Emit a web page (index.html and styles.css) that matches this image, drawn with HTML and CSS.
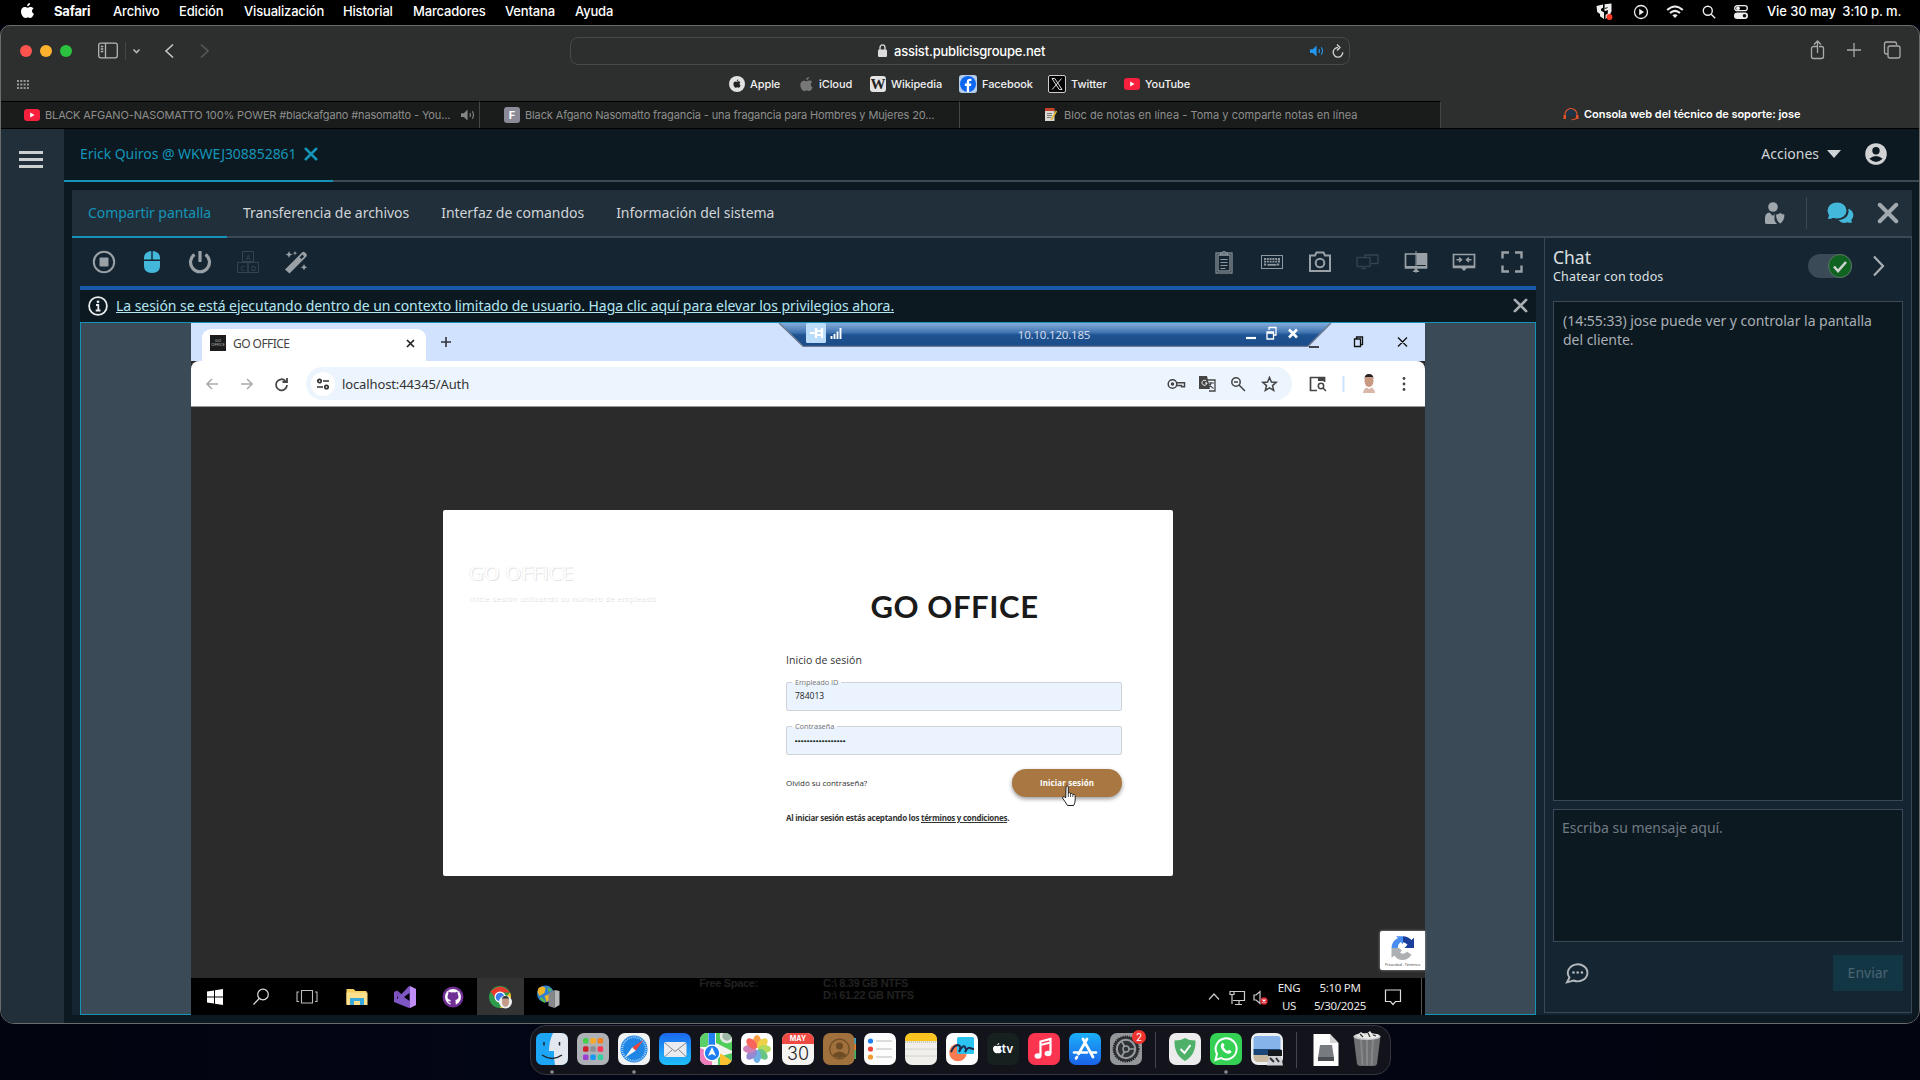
FILE: index.html
```html
<!DOCTYPE html>
<html lang="es">
<head>
<meta charset="utf-8">
<title>Consola web del técnico de soporte: jose</title>
<link rel="stylesheet" href="styles.css">
</head>
<body>
<svg width="0" height="0" class="defs">
  <symbol id="apple" viewBox="0 0 14 17"><path d="M9.8 0c.1 1.8-1.500 3.600-3.200 3.500C6.400 1.800 8 .2 9.800 0zM13.500 5.700c-1 .6-1.600 1.500-1.600 2.800 0 1.500.8 2.500 2 3-.6 1.900-2 4.500-3.700 4.500-1 0-1.500-.6-2.700-.6s-1.800.6-2.700.6C2.600 16 0 12.500 0 9c0-3 1.900-4.800 4-4.800 1.200 0 2.100.7 3 .7.900 0 2-.8 3.400-.8 1.200 0 2.400.6 3.100 1.600z"/></symbol>
  <symbol id="yt" viewBox="0 0 16 12"><rect width="16" height="12" rx="3.200" fill="#f8203c"/><path d="M6.200 3.500v5L10.600 6z" fill="#fff"/></symbol>
  <symbol id="speaker" viewBox="0 0 16 12"><path d="M0 4h3l4-3.800v11.600L3 8H0z" fill="currentColor"/><path d="M9.500 3.800q1.200 2.200 0 4.400M12 2q2.600 4 0 8" fill="none" stroke="currentColor" stroke-width="1.200"/></symbol>
  <symbol id="cross" viewBox="0 0 20 20"><path d="M2.500 2.500l15 15M17.500 2.500l-15 15" stroke="currentColor" stroke-width="3.600" stroke-linecap="round"/></symbol>
</svg>

<header class="menubar">
  <nav class="menus">
    <svg class="logo" width="13" height="16"><use href="#apple" fill="#fff"/></svg>
    <b>Safari</b><span>Archivo</span><span>Edición</span><span>Visualización</span><span>Historial</span><span>Marcadores</span><span>Ventana</span><span>Ayuda</span>
  </nav>
  <div class="status">
    <svg width="18" height="18" viewBox="0 0 18 18"><path d="M.5 3L7 1.500v3.300L5 6v1.500l3 1.800V16L4 13.300V11L1.200 9zM8.500 1.200L15.500.5v8L13 13l-3.500 3v-4l2.300-1.500V7L8.500 8.300z" fill="#eee"/><path d="M7.800 1v4L5.500 6.200v1l3 1.600V16M8.600 5.600l3-1" stroke="#000" fill="none" stroke-width=".9"/><circle cx="13.500" cy="14" r="2.900" fill="#ff3b24"/></svg>
    <svg width="16" height="16" viewBox="0 0 16 16"><circle cx="8" cy="8" r="6.500" fill="none" stroke="#eee" stroke-width="1.300"/><path d="M6.200 4.800v6.400L11 8z" fill="#eee"/></svg>
    <svg width="18" height="14" viewBox="0 0 18 14"><g fill="none" stroke="#eee" stroke-width="2.100"><path d="M1.200 5q7.800-7 15.600 0M4 8q5-4.400 10 0"/></g><path d="M6.400 10.200q2.600-2 5.200 0L9 13z" fill="#eee"/></svg>
    <svg width="14" height="14" viewBox="0 0 14 14"><g fill="none" stroke="#eee" stroke-width="1.400"><circle cx="5.800" cy="5.800" r="4.500"/><path d="M9.200 9.200l4 4"/></g></svg>
    <svg width="14" height="14" viewBox="0 0 14 14"><rect x=".7" y=".7" width="12.600" height="5" rx="2.500" fill="none" stroke="#eee" stroke-width="1.300"/><circle cx="4" cy="3.200" r="1.900" fill="#eee"/><rect y="7.500" width="14" height="6.500" rx="3.200" fill="#eee"/><circle cx="10.500" cy="10.700" r="1.800" fill="#111"/></svg>
    <time>Vie 30 may&ensp;3:10 p. m.</time>
  </div>
</header>

<div class="window">
  <div class="toolbar">
    <div class="lights"><i></i><i></i><i></i></div>
    <svg class="side-ic" width="40" height="22" viewBox="0 0 40 22"><g fill="none" stroke="#b5b6b5" stroke-width="1.300"><rect x=".7" y="3.200" width="18.600" height="14.600" rx="2"/><path d="M7.500 3v15M2.800 6.500h2.500M2.800 9h2.500M2.800 11.500h2.500"/><path d="M27.500 2v18" stroke="#454746" stroke-width="1"/><path d="M35.500 9.500l3 3 3-3" stroke-width="1.600"/></g></svg>
    <svg class="nav-ic" width="60" height="20" viewBox="0 0 60 20"><path d="M12 3.500L5 10l7 6.500" fill="none" stroke="#c5c6c5" stroke-width="1.600"/><path d="M40 3.500l7 6.500-7 6.500" fill="none" stroke="#575958" stroke-width="1.600"/></svg>
    <div class="urlbar">
      <svg width="9" height="14" viewBox="0 0 9 14"><rect y="5.500" width="9" height="7.500" rx="1.300" fill="#dcdcdc"/><path d="M2 6V3.500a2.500 2.700 0 0 1 5 0V6" fill="none" stroke="#dcdcdc" stroke-width="1.300"/></svg>
      <span>assist.publicisgroupe.net</span>
      <div class="url-right">
        <svg width="15" height="12" color="#2196f3"><use href="#speaker"/></svg>
        <svg width="12" height="15" viewBox="0 0 12 15"><path d="M6 3.500a4.800 4.800 0 1 0 4.800 4.800M5 .5l3 3-3 3" fill="none" stroke="#d5d5d5" stroke-width="1.300"/></svg>
      </div>
    </div>
    <svg class="right-ic" width="95" height="24" viewBox="0 0 95 24"><g fill="none" stroke="#a9aaa9" stroke-width="1.300"><path d="M8 8.500H4.500a2 2 0 0 0-2 2v8a2 2 0 0 0 2 2h8a2 2 0 0 0 2-2v-8a2 2 0 0 0-2-2H10M8.500 15V3.500M5 6.500l3.500-3.500L12 6.500M38 12h14M45 5v14"/><path d="M79 16h-1.500a2 2 0 0 1-2-2V6a2 2 0 0 1 2-2h8a2 2 0 0 1 2 2v1"/><rect x="79" y="8" width="12" height="12" rx="2"/></g></svg>
  </div>
  <div class="bookmarks">
    <svg class="grid-ic" width="12" height="9" viewBox="0 0 12 9"><g fill="#999"><path d="M0 0h2v2H0zM3.300 0h2v2h-2zM6.600 0h2v2h-2zM9.900 0h2v2h-2zM0 3.500h2v2H0zM3.300 3.500h2v2h-2zM6.600 3.500h2v2h-2zM9.900 3.500h2v2h-2zM0 7h2v2H0zM3.300 7h2v2h-2zM6.600 7h2v2h-2zM9.900 7h2v2h-2z"/></g></svg>
    <a class="bm-apple"><svg width="16" height="16" viewBox="0 0 16 16"><circle cx="8" cy="8" r="8" fill="#e2e2e2"/><svg x="4.200" y="3.200" width="7.600" height="9"><use href="#apple" fill="#222"/></svg></svg>Apple</a>
    <a class="bm-icloud"><svg width="13" height="15"><use href="#apple" fill="#777"/></svg>iCloud</a>
    <a class="bm-wiki"><i class="wik">W</i>Wikipedia</a>
    <a class="bm-fb"><svg width="18" height="18" viewBox="0 0 18 18"><rect width="18" height="18" rx="3" fill="#b8cdea"/><circle cx="9" cy="9" r="8" fill="#0a66f0"/><path d="M7.800 17V11H5.800V8.500h2V7c0-2.200 1.200-3.300 3.100-3.300l1.500.1V6h-1.100c-1 0-1.200.5-1.200 1.200v1.300h2.200L12 11h-1.900v6z" fill="#fff"/></svg>Facebook</a>
    <a class="bm-x"><svg width="18" height="18" viewBox="0 0 18 18"><rect x=".5" y=".5" width="17" height="17" rx="1.500" fill="#050505" stroke="#ccc"/><path d="M4 3.500h2.800l7.200 11h-2.800zM13.500 3.500L4.200 14.500" fill="none" stroke="#ddd"/></svg>Twitter</a>
    <a class="bm-yt"><svg width="16" height="12"><use href="#yt"/></svg>YouTube</a>
  </div>
  <div class="tabs">
    <div class="tab t1"><svg width="16" height="12"><use href="#yt"/></svg><span>BLACK AFGANO-NASOMATTO 100% POWER #blackafgano #nasomatto - You...</span><svg class="snd" width="15" height="12" color="#858685"><use href="#speaker"/></svg></div>
    <div class="tab t2"><i class="fav-f">F</i><span>Black Afgano Nasomatto fragancia - una fragancia para Hombres y Mujeres 20...</span></div>
    <div class="tab t3"><svg width="13" height="13" viewBox="0 0 13 13"><rect x="1" y="2" width="9.500" height="11" fill="#d8d8d0"/><path d="M1 0h9.500v3H1z" fill="#c5432b"/><path d="M3 5.500h5M3 7.500h5M3 9.500h4" stroke="#777"/><path d="M12.500 3L8 10.500l-.5 1.500" stroke="#e3b62d" stroke-width="1.500"/></svg><span>Bloc de notas en línea - Toma y comparte notas en línea</span></div>
    <div class="tab t4"><svg width="16" height="13" viewBox="0 0 16 13"><path d="M3 8a5.300 6 0 1 1 10 0z" fill="#1f3447"/><path d="M2 9V6.500a6 6 0 0 1 12 0V9M13.500 9q0 2.700-5 2.800" fill="none" stroke="#e2502a" stroke-width="1.100"/><path d="M.5 7H3v4H.5zM13 7h2.500v4H13z" fill="#e2502a"/></svg><span>Consola web del técnico de soporte: jose</span></div>
  </div>

  <div class="console">
    <aside class="rail"><i></i><i></i><i></i></aside>
    <main class="main">
      <div class="session-bar">
        <div class="session"><span>Erick Quiros @ WKWEJ308852861</span><svg width="14" height="14" color="#1495b8"><use href="#cross"/></svg></div>
        <div class="actions"><span>Acciones</span><i class="caret"></i>
          <svg width="22" height="22" viewBox="0 0 22 22"><circle cx="11" cy="11" r="10.800" fill="#d0d2d4"/><circle cx="11" cy="7.800" r="3.700" fill="#0c1921"/><path d="M4.300 15.800q6.700-5.500 13.400 0Q11 22 4.300 15.800z" fill="#0c1921"/></svg></div>
      </div>
      <div class="panel">
        <div class="panel-tabs">
          <span class="on">Compartir pantalla</span><span>Transferencia de archivos</span><span>Interfaz de comandos</span><span>Información del sistema</span>
          <div class="panel-ic">
            <svg width="22" height="24" viewBox="0 0 22 24"><g fill="#9fa6ac"><circle cx="9" cy="6" r="4.800"/><path d="M1 22v-5q0-5 4.500-5.500L9 15l1.500-2.500V19q.5 2 2.500 4H3q-2 0-2-1z"/><path d="M11.500 13.200q2.800-.2 4.700-1.700 2 1.500 4.800 1.700 0 7-4.800 9.800-4.700-2.800-4.700-9.800z" stroke="#212f3b"/></g></svg>
            <i class="vline"></i>
            <svg width="27" height="24" viewBox="0 0 27 24"><path d="M25 21.500l-.7-2.500c3.500-3.500 2.500-9.500-3-11.200 1.500 6.500-3 11-9.800 11.200 2.500 3.200 6 3.700 9 2.300 1.500.7 3 .7 4.500.2z" fill="#43b8da"/><ellipse cx="10" cy="9.500" rx="9.500" ry="8" fill="#43b8da"/><path d="M2.500 12l-1.500 6q3.500 0 5.500-1.500z" fill="#43b8da"/></svg>
            <svg width="22" height="22" color="#a2a9ae"><use href="#cross"/></svg>
          </div>
        </div>
        <div class="work">
          <section class="share">
            <div class="tools">
              <svg viewBox="0 0 24 24"><circle cx="12" cy="12" r="10.200" fill="none" stroke="#99a1a7" stroke-width="2"/><rect x="7.500" y="7.500" width="9" height="9" rx="1" fill="#99a1a7"/></svg>
              <svg viewBox="0 0 24 24"><path d="M11.300 1v8.500H4V8q0-6 7.300-7zM12.700 1v8.500H20V8q0-6-7.300-7zM4 11h16v5q0 7-8 7t-8-7z" fill="#43b8da"/></svg>
              <svg viewBox="0 0 24 24"><path d="M6.500 4.500a9.500 9.500 0 1 0 11 0M12 1v11" fill="none" stroke="#99a1a7" stroke-width="3.200"/></svg>
              <svg viewBox="0 0 24 24"><g fill="none" stroke="#33434f"><path d="M6.500 1.500h11v10h-11zM1.500 12.500h10.500v10H1.500zM12 12.500h10.500v10H12z"/></g><g class="blk"><text x="10" y="9.500">A</text><text x="4.500" y="20.500">C</text><text x="15" y="20.500">D</text></g></svg>
              <svg viewBox="0 0 24 24"><g fill="#99a1a7"><path d="M1 19.500L18 2.500q1.500-1.500 3 0l1.200 1.200q1.300 1.500 0 3L5.500 23.500z"/><path d="M5 1l1 2.500L8.500 4.500 6 5.500 5 8 4 5.500 1.500 4.500 4 3.500zM11 1l.6 1.600 1.600.6-1.600.6L11 5.400l-.6-1.600-1.600-.6 1.600-.6zM20 14l1 2.300 2.300 1-2.300 1L20 20.500l-1-2.200-2.300-1 2.300-1z"/></g><path d="M15.500 7.500l3-3 1.500 2-2.500 2.500z" fill="#152531"/></svg>
              <i class="grow"></i>
              <svg viewBox="0 0 24 24"><g fill="none" stroke="#8f989f" stroke-width="1.200"><rect x="4" y="3" width="16" height="20"/><rect x="6" y="5" width="12" height="16"/><path d="M8.500 5V3h2a1.500 1.500 0 0 1 3 0h2v2zM8.500 9.500h7M8.500 12.500h7M8.500 15.500h7M8.500 18.500h5"/></g></svg>
              <svg viewBox="0 0 24 24"><rect x="1.500" y="5.500" width="21" height="13" fill="none" stroke="#8f989f"/><path d="M4 9h16M4 11.700h16M4 14.500h3M17 14.500h3M19 8.500v4" stroke="#8f989f" stroke-width="1.800" stroke-dasharray="2 .8"/><path d="M7.500 14.800h9" stroke="#8f989f" stroke-width="1.800"/></svg>
              <svg viewBox="0 0 24 24"><g fill="none" stroke="#99a1a7" stroke-width="2"><path d="M2 5.500h5l1.500-3h7l1.500 3h5v15.500H2z"/><circle cx="12" cy="13" r="4.300"/></g></svg>
              <svg viewBox="0 0 24 24"><g fill="none" stroke="#35454f" stroke-width="1.300"><rect x="1" y="7.500" width="13" height="9"/><path d="M14 5h8v8.500h-7M5 18.500h5M9 7V5h5"/></g></svg>
              <svg viewBox="0 0 24 24"><path d="M1.500 4h21v14h-21z" fill="none" stroke="#99a1a7" stroke-width="1.700"/><path d="M12.500 3H23v12H12.500zM1 16h22v2H1zM12 18l3.500 4h-7z" fill="#99a1a7"/><path d="M12 1v22" stroke="#99a1a7"/></svg>
              <svg viewBox="0 0 24 24"><path d="M1.500 4.500h21v13h-21z" fill="none" stroke="#99a1a7" stroke-width="1.700"/><path d="M1 15.500h22v2.500H1zM9 18h6l-3 3z" fill="#99a1a7"/><path d="M4.500 9.800h4.500M7 7.500l2.500 2.300L7 12M19.500 9.800H15M17 7.500l-2.500 2.300L17 12" fill="none" stroke="#99a1a7" stroke-width="1.500"/></svg>
              <svg viewBox="0 0 24 24"><path d="M2.500 8.500V2.500H9M15 2.500h6.500v6M21.500 15.500v6H15M9 21.500H2.500v-6" fill="none" stroke="#99a1a7" stroke-width="2.400"/></svg>
            </div>
            <div class="notice">
              <svg width="20" height="20" viewBox="0 0 20 20"><circle cx="10" cy="10" r="8.900" fill="none" stroke="#e8eaeb" stroke-width="1.800"/><circle cx="10" cy="5.800" r="1.400" fill="#e8eaeb"/><path d="M8 9h2.300v5.500M7.700 14.500h4.800" fill="none" stroke="#e8eaeb" stroke-width="1.800"/></svg>
              <a>La sesión se está ejecutando dentro de un contexto limitado de usuario. Haga clic aquí para elevar los privilegios ahora.</a>
              <svg class="x" width="15" height="15" color="#a9afb3"><use href="#cross"/></svg>
            </div>
            <div class="stage">
              <div class="remote">
                <div class="ch-tabs">
                  <div class="ch-tab"><i class="gofav">GO<br>OFFICE</i><span>GO OFFICE</span><svg width="9" height="9" viewBox="0 0 9 9"><path d="M1 1l7 7M8 1L1 8" stroke="#222" stroke-width="1.700"/></svg></div>
                  <svg class="plus" width="12" height="12" viewBox="0 0 12 12"><path d="M6 1v10M1 6h10" stroke="#333" stroke-width="1.600"/></svg>
                  <svg class="wbtn" width="98" height="12" viewBox="0 0 98 12"><g fill="none" stroke="#111" stroke-width="1.300"><path d="M4 11.500h10M49.500 3.500h6v7.500h-6zM51.500 3.500V1.500h6V9h-2M93 2l9 9M102 2l-9 9" transform="translate(-5 -.5)"/></g></svg>
                </div>
                <div class="rdp">
                  <svg class="rdp-bg" width="552" height="24" viewBox="0 0 552 24"><defs><linearGradient id="rg" x2="0" y2="1"><stop stop-color="#85acdb"/><stop offset=".42" stop-color="#3f73b0"/><stop offset=".52" stop-color="#1e5290"/><stop offset="1" stop-color="#1c4c8a"/></linearGradient></defs><path d="M0 0h552l-23 23H24z" fill="url(#rg)"/><path d="M0 0l24 23.300h505L552 0" fill="none" stroke="#6e7a8d" stroke-width="1.300"/><rect x="27" y="0" width="20" height="20" rx="1.500" fill="#bcdcfc"/><path d="M31 10h6M37 5v10M37 8h6v4h-6M43 5v10" stroke="#fff" stroke-width="2.200" fill="none"/><path d="M52.500 13v3M55.500 11v5M58.500 8.500v7.500M61.500 5v11" stroke="#fff" stroke-width="1.900"/><path d="M467 15h10" stroke="#fff" stroke-width="2.200"/><path d="M488 9h6.500v7H488zM490 7V4.500h7V12h-2M488 10h6.500" fill="none" stroke="#fff" stroke-width="1.300"/><path d="M510 6.500l8 8M518 6.500l-8 8" stroke="#fff" stroke-width="2.600"/></svg>
                  <span>10.10.120.185</span>
                </div>
                <div class="ch-bar">
                  <svg class="cb-nav" width="90" height="18" viewBox="0 0 90 18"><g fill="none" stroke="#aaa" stroke-width="1.500"><path d="M17 9H6M11 4L6 9l5 5M40 9h11M46 4l5 5-5 5"/></g><path d="M89.500 6A5.500 5.500 0 1 0 91 10M91 3v4h-4.500" fill="none" stroke="#444" stroke-width="1.800" transform="translate(-5 0)"/></svg>
                  <div class="omni">
                    <i class="site"><svg width="14" height="12" viewBox="0 0 14 12"><g fill="none" stroke="#333" stroke-width="1.700"><circle cx="3.500" cy="3" r="1.700"/><path d="M7 3h6M1 9h6"/><circle cx="10.500" cy="9" r="1.700"/></g></svg></i>
                    <span>localhost:44345/Auth</span>
                    <svg class="omni-ic" width="112" height="20" viewBox="0 0 112 20"><g fill="none" stroke="#444" stroke-width="1.500"><g transform="translate(-4 0)"><circle cx="5.500" cy="10" r="4.300"/><circle cx="5.500" cy="10" r="1" fill="#444"/><path d="M9.500 8.800h8v4h-3v-1.300H9.500"/></g><g transform="translate(-2 0)"><path d="M37 6h9v11h-6" stroke-width="1.300"/><path d="M39 9h6M42 8v1.500q-1 3-3 4M40 10q2 3 4.500 4.500" stroke-width="1.100"/></g><g transform="translate(-2 0)"><circle cx="67" cy="8" r="4.200"/><path d="M65 8h4M70 11l6 6"/></g><path d="M98.500 3.500l1.900 4.500 4.800.4-3.700 3.200 1.200 4.800-4.200-2.600-4.200 2.600 1.200-4.800-3.700-3.200 4.800-.4z"/></g><g transform="translate(-2 0)"><path d="M30 2h8l3 13H30z" fill="#444"/><path d="M37.300 7A2.500 2.500 0 1 0 38 9h-2" fill="none" stroke="#fff"/></g></svg>
                  </div>
                  <svg class="cb-right" width="104" height="24" viewBox="0 0 104 24"><g transform="translate(1 0)"><path d="M9 18.500H2.500V5.500h14V10" fill="none" stroke="#444" stroke-width="1.700"/><path d="M10 5h7v4h-7z" fill="#444"/><circle cx="13" cy="14" r="2.700" fill="none" stroke="#444" stroke-width="1.500"/><path d="M15 16l3 3" stroke="#444" stroke-width="1.500"/><path d="M35.500 4v16" stroke="#cfe2fb" stroke-width="2"/></g><ellipse cx="62" cy="9" rx="4.500" ry="6" fill="#c89880"/><path d="M57.500 7q0-5 4.500-5t4.500 5l-1-2h-7z" fill="#2a2020"/><path d="M56 21q.5-4.500 3.500-5.500l2.500 1.500 2.500-1.500q3 1 3.500 5.500z" fill="#d9b8aa"/><g fill="#444"><circle cx="97" cy="6.500" r="1.400"/><circle cx="97" cy="12" r="1.400"/><circle cx="97" cy="17.500" r="1.400"/></g></svg>
                </div>
                <div class="page">
                  <div class="card">
                    <div class="ghost"><h3>GO OFFICE</h3><p>Inicie sesión utilizando su número de empleado</p></div>
                    <form class="login">
                      <h1>GO OFFICE</h1>
                      <h2>Inicio de sesión</h2>
                      <div class="field"><label>Empleado ID</label>784013</div>
                      <div class="field"><label>Contraseña</label><span class="dots">•••••••••••••••••</span></div>
                      <div class="row"><a>Olvidó su contraseña?</a><div class="btn">Iniciar sesión
                        <svg class="hand" width="16" height="22" viewBox="0 0 16 22"><path d="M5 1.500q1.500-1.200 2.300.3V8q1.700-.8 2.200.5 1.600-.6 2.200.8 2.300-.4 2.500 1.200v4.500q0 2.500-1.500 5.500H6.500Q4 16.500 1.500 13q0-2 2-1.200L4.700 13z" fill="#fff" stroke="#222"/><path d="M7.300 8v4M9.500 8.500V12M11.800 9.500V12" stroke="#222" stroke-width=".8"/></svg></div></div>
                      <p class="terms">Al iniciar sesión estás aceptando los <u>términos y condiciones</u>.</p>
                    </form>
                  </div>
                  <div class="captcha"><svg width="26" height="26" viewBox="0 0 26 26"><path d="M1.500 13A11.500 11.500 0 0 1 8 3L6 1.200h7v8L10.500 7Q8 9 7.800 13z" fill="#4a8df0"/><path d="M13 1.200q5 0 8.500 3.800L24 2.800V13h-9.500l3-3.200Q15.500 7.500 13 7.200z" fill="#1b3e9d"/><path d="M1.500 13h6.300l1 0L12 15.500 10 17.500q3.500 3 7-1l4.500 3.200Q18 25 12.500 25 7.500 25 4.300 20.500L1.500 23z" fill="#adb0b2"/></svg><small>Privacidad - Términos</small></div>
                </div>
                <div class="taskbar">
                  <div class="apps">
                    <svg viewBox="0 0 24 24"><path d="M4 6.500l7-1v6H4zM12 5.300l8-1.300v7.500h-8zM4 12.500h7v6l-7-1zM12 12.500h8V20l-8-1.300z" fill="#fff"/></svg>
                    <svg viewBox="0 0 24 24"><g fill="none" stroke="#ddd" stroke-width="1.200"><circle cx="13" cy="9.500" r="5.300"/><path d="M9.300 13.500L3.500 19.500"/></g></svg>
                    <svg viewBox="0 0 24 24"><path d="M3.500 5.500h11v12.500h-11zM1 7h-2v9.500h2M17 7h2v9.500h-2" fill="none" stroke="#bbb" stroke-width="1.100"/></svg>
                    <svg viewBox="0 0 24 24"><g transform="translate(-1 0)"><path d="M1.500 4h7l2 2h11v13h-20z" fill="#f6cf60"/><path d="M1.500 7.500h21V20h-21z" fill="#fde08b"/><path d="M5 20v-7h14v7h-4v-4H9v4z" fill="#39a8dd"/></g></svg>
                    <svg viewBox="0 0 24 24"><path d="M1 7l3-1.500 14 11V23L1 9z" fill="#7a50b8"/><path d="M1 17V7l3 3v4L16 1l7 3v16l-7 3z" fill="#7f57c4"/><path d="M17 1l6 3v16l-6 3z" fill="#c08cf5"/><path d="M16.500 8v8L11 12z" fill="#000"/></svg>
                    <svg viewBox="0 0 24 24"><circle cx="12" cy="12" r="10.500" fill="#6f2f94"/><circle cx="12" cy="12" r="8" fill="#fff"/><path d="M7.500 6.500l2.500 1q2-.5 4 0l2.500-1 .2 2.500q2.500 5-2.200 6l.3 5.500H9.500V18Q7.500 18 7 16l2.500.7V15Q4.800 14 7.300 9z" fill="#6f2f94"/></svg>
                    <span class="act"><svg viewBox="0 0 24 24"><circle cx="12" cy="12" r="11" fill="#2d9b4b"/><path d="M22 7.500A11 11 0 0 1 12 23l4.500-9z" fill="#fbc116"/><path d="M2.500 6.500L8 14l4-6.500h10q-9-11-19.500-1z" fill="#e8392c"/><circle cx="12" cy="12" r="5.500" fill="#fff"/><circle cx="12" cy="12" r="4.300" fill="#3b7ded"/><circle cx="17.500" cy="17" r="6.500" fill="#eee"/><ellipse cx="17.500" cy="17" rx="3.500" ry="4.800" fill="#c49a86"/><path d="M14 15q0-4 3.500-4t3.500 4l-1-1.500h-5z" fill="#333"/></svg></span>
                    <svg viewBox="0 0 24 24"><g transform="translate(1.500 0)"><circle cx="9" cy="9" r="8.500" fill="#2f7fd0"/><path d="M2 3q4-3 7 0L8 8l-5 3-2-4zM8 11l5-2v6l-3 2z" fill="#f0b428"/><path d="M5 12l4 4-1 2-5-4zM11 2l5 3-4 2z" fill="#59b84b"/><path d="M12 8l6-3v18l-6-2z" fill="#85898b"/><path d="M18 5l5 1v14l-5 3z" fill="#b6b9ba"/></g></svg>
                  </div>
                  <div class="disk"><span>Free Space:</span><span>C:\ 8.39 GB NTFS<br>D:\ 61.22 GB NTFS</span></div>
                  <div class="tray">
                    <svg width="62" height="20" viewBox="0 0 62 20"><g fill="none" stroke="#ccc" stroke-width="1.200"><path d="M4 12.500l5-5.500 5 5.500"/><path d="M29 4.500h10.500v9H28M34 14v3M30 17.500h7M25 4.500h4v3h-4zM27 8v9"/><path d="M49 8v5h2l4 3.500V4.500L51 8z"/></g><circle cx="59" cy="14" r="3.700" fill="#d92a35"/><path d="M57.500 12.500l3 3M60.500 12.500l-3 3" stroke="#fff" stroke-width="1.100"/></svg>
                    <div class="lng">ENG<br>US</div>
                    <div class="clk">5:10 PM<br>5/30/2025</div>
                    <svg class="note" width="18" height="18" viewBox="0 0 18 18"><path d="M1.500 2h15v11.500h-5L9 16.500l-2.500-3h-5z" fill="none" stroke="#ddd" stroke-width="1.200"/></svg>
                  </div>
                </div>
              </div>
            </div>
          </section>
          <aside class="chat">
            <div class="chat-head">
              <div><h4>Chat</h4><p>Chatear con todos</p></div>
              <i class="switch"><svg width="24" height="24" viewBox="0 0 24 24"><circle cx="12" cy="12" r="11.500" fill="#0f621f" stroke="#5b7567"/><path d="M6 12.500l4 4.500 8-9" fill="none" stroke="#cdd3cf" stroke-width="2.600"/></svg></i>
              <svg class="chev" width="14" height="22" viewBox="0 0 14 22"><path d="M2 1.500l9 9.500-9 9.500" fill="none" stroke="#a9b0b5" stroke-width="2.200"/></svg>
            </div>
            <div class="log">(14:55:33) jose puede ver y controlar la pantalla del cliente.</div>
            <div class="msg">Escriba su mensaje aquí.</div>
            <div class="send">
              <svg width="24" height="22" viewBox="0 0 24 22"><path d="M4.500 15.500A9.800 8.500 0 1 1 8.500 18.500L2 20.300z" fill="none" stroke="#b3b9bd" stroke-width="1.900"/><g fill="#b3b9bd"><circle cx="8.500" cy="10.500" r="1.300"/><circle cx="12.700" cy="10.500" r="1.300"/><circle cx="16.900" cy="10.500" r="1.300"/></g></svg>
              <div class="send-btn">Enviar</div>
            </div>
          </aside>
        </div>
      </div>
    </main>
  </div>
</div>

<footer class="dock">
  <svg viewBox="0 0 32 32"><rect width="32" height="32" rx="7" fill="#1d86f2"/><path d="M0 7q0-7 7-7h10q-4 8-4 17h5q0 8 1 15H7q-7 0-7-7z" fill="#1ea6f6"/><path d="M17 0h8q7 0 7 7v18q0 7-7 7h-6q-1.500-7-1-14h-5q0-10 4-18z" fill="#e3e7ee"/><path d="M8 9v3.500M23.500 9v3.500M6 22q10 7 20 0" stroke="#1c2530" stroke-width="1.500" fill="none"/><circle cx="16" cy="39" r="1.800" fill="#8d8f96"/></svg>
  <svg viewBox="0 0 32 32"><rect width="32" height="32" rx="7" fill="#aeb1b6"/><g><rect x="6" y="5" width="5.500" height="5.500" rx="1.500" fill="#43d14a"/><rect x="13.300" y="5" width="5.500" height="5.500" rx="1.500" fill="#f7a928"/><rect x="20.600" y="5" width="5.500" height="5.500" rx="1.500" fill="#f4801f"/><rect x="6" y="13.200" width="5.500" height="5.500" rx="1.500" fill="#d0202c"/><rect x="13.300" y="13.200" width="5.500" height="5.500" rx="1.500" fill="#8c8f94"/><rect x="20.600" y="13.200" width="5.500" height="5.500" rx="1.500" fill="#fb3657"/><rect x="6" y="21.400" width="5.500" height="5.500" rx="1.500" fill="#9a3fd0"/><rect x="13.300" y="21.400" width="5.500" height="5.500" rx="1.500" fill="#1798f5"/><rect x="20.600" y="21.400" width="5.500" height="5.500" rx="1.500" fill="#35cfa0"/></g></svg>
  <svg viewBox="0 0 32 32"><rect width="32" height="32" rx="7" fill="#f2f3f5"/><circle cx="16" cy="16" r="13.500" fill="#1f86e6"/><circle cx="16" cy="16" r="11.800" fill="none" stroke="#d5e9fb" stroke-width="2" stroke-dasharray=".7 1.300"/><path d="M25.500 7L14.300 14.300l3.400 3.400z" fill="#f0453c"/><path d="M6.500 25l7.800-10.700 3.400 3.400z" fill="#f2f2f2"/><circle cx="16" cy="39" r="1.800" fill="#8d8f96"/></svg>
  <svg viewBox="0 0 32 32"><defs><linearGradient id="ml" x2="0" y2="1"><stop stop-color="#1b68ee"/><stop offset="1" stop-color="#1fc0fa"/></linearGradient></defs><rect width="32" height="32" rx="7" fill="url(#ml)"/><rect x="5" y="9" width="22.500" height="15" rx="2" fill="#e9ebee"/><path d="M6 10l10 8.500L27 10M6 23.500l7.500-7M27 23.500l-7.500-7" fill="none" stroke="#85898f"/></svg>
  <svg class="clip" viewBox="0 0 32 32"><rect width="32" height="32" fill="#f3f3f0"/><path d="M0 0h8v14H0z" fill="#5bd06a"/><path d="M16 0h16v18L16 10z" fill="#4fce5c"/><path d="M0 15l12 5v12H0z" fill="#ee7bbb"/><path d="M18 24l14-4v12H18z" fill="#52cc62"/><path d="M20 20l12 8v4H20z" fill="#fbc331"/><path d="M8.500 0H15v14H8.500z" fill="#1f80f3"/><circle cx="27" cy="3" r="6" fill="#9fb5a5" stroke="#e5e9e5" stroke-width="2.500"/><circle cx="12" cy="20" r="7.800" fill="#1f7ff2" stroke="#fff" stroke-width="1.300"/><path d="M12 14l4 9-4-2-4 2z" fill="#fff"/></svg>
  <svg viewBox="0 0 32 32"><rect width="32" height="32" rx="7" fill="#fff"/><g opacity=".82"><ellipse cx="16" cy="8.500" rx="4" ry="6.500" fill="#fb8c1e"/><ellipse cx="16" cy="8.500" rx="4" ry="6.500" fill="#ecc81f" transform="rotate(45 16 16)"/><ellipse cx="16" cy="8.500" rx="4" ry="6.500" fill="#a4d33a" transform="rotate(90 16 16)"/><ellipse cx="16" cy="8.500" rx="4" ry="6.500" fill="#46b96c" transform="rotate(135 16 16)"/><ellipse cx="16" cy="8.500" rx="4" ry="6.500" fill="#4d9de0" transform="rotate(180 16 16)"/><ellipse cx="16" cy="8.500" rx="4" ry="6.500" fill="#7d71c9" transform="rotate(225 16 16)"/><ellipse cx="16" cy="8.500" rx="4" ry="6.500" fill="#c465a8" transform="rotate(270 16 16)"/><ellipse cx="16" cy="8.500" rx="4" ry="6.500" fill="#f6443a" transform="rotate(315 16 16)"/></g></svg>
  <div class="cal"><b>MAY</b><span>30</span></div>
  <svg viewBox="0 0 32 32"><path d="M28 5h5v6h-5z" fill="#3aa5c9"/><path d="M28 11h5v6h-5z" fill="#e3812b"/><path d="M28 17h5v9h-5z" fill="#3cb56a"/><rect width="31.500" height="32" rx="7" fill="#a0713d"/><g fill="none" stroke="#6d4b24" stroke-width="1.200"><circle cx="16.500" cy="16" r="9.800"/></g><circle cx="16.500" cy="13" r="3.500" fill="#6d4b24"/><path d="M9.500 22q7-7 14 0-7 6-14 0z" fill="#6d4b24"/></svg>
  <svg viewBox="0 0 32 32"><rect width="32" height="32" rx="7" fill="#fdfdfd"/><path d="M12 8h16M12 16h16M12 24h16" stroke="#bbb"/><g stroke-width="1"><circle cx="6.500" cy="8" r="2.600" fill="#1f7ff5"/><circle cx="6.500" cy="16" r="2.600" fill="#f0453c"/><circle cx="6.500" cy="24" r="2.600" fill="#f29a2e"/></g></svg>
  <svg viewBox="0 0 32 32"><rect width="32" height="32" rx="7" fill="#f0efec"/><path d="M0 8V7q0-7 7-7h18q7 0 7 7v1z" fill="#fcc41f"/><path d="M0 9h32" stroke="#a89f80" stroke-dasharray="1 1"/><path d="M0 16h32M0 23h32" stroke="#d3d2ce"/></svg>
  <svg viewBox="0 0 32 32"><rect width="32" height="32" rx="7" fill="#fff"/><circle cx="12" cy="19.500" r="8.800" fill="#fb7a50"/><rect x="11" y="4" width="17" height="17" rx="1.500" fill="#2bc3ef"/><path d="M5 19q3-7 7-7 4 1 1 7 4-8 6-5t0 5q3-5 5-4t4 1" fill="none" stroke="#1b2b50" stroke-width="2"/></svg>
  <div class="tv"><svg width="9" height="11"><use href="#apple" fill="#fff"/></svg>tv</div>
  <svg viewBox="0 0 32 32"><rect width="32" height="32" rx="7" fill="#fb3450"/><path d="M12.500 22.500V8.500l10-2.500v14M12.500 12l10-2.500" fill="none" stroke="#fff" stroke-width="2.200"/><ellipse cx="10" cy="23" rx="3.400" ry="2.800" fill="#fff"/><ellipse cx="20" cy="20.500" rx="3.400" ry="2.800" fill="#fff"/></svg>
  <svg viewBox="0 0 32 32"><rect width="32" height="32" rx="7" fill="url(#as)"/><defs><linearGradient id="as" x2="0" y2="1"><stop stop-color="#1bb0f8"/><stop offset="1" stop-color="#1a62e8"/></linearGradient></defs><path d="M14 6l10 18M18 6L9.500 21M5 19.500h13M21.500 19.500H27M8 24l-1 1.500" stroke="#fff" stroke-width="2.700" stroke-linecap="round"/></svg>
  <div class="gear"><svg viewBox="0 0 32 32"><rect width="32" height="32" rx="7" fill="#94979a"/><circle cx="16" cy="16" r="12.500" fill="#303336"/><circle cx="16" cy="16" r="12.500" fill="none" stroke="#222" stroke-width="2" stroke-dasharray="1.200 1"/><circle cx="16" cy="16" r="9.200" fill="none" stroke="#9a9da0" stroke-width="2"/><circle cx="16" cy="16" r="3" fill="none" stroke="#9a9da0" stroke-width="1.500"/><path d="M19 16h6M14.500 13.500l-3-5.500M14.500 18.500l-3 5.500" stroke="#9a9da0" stroke-width="1.600"/></svg><i>2</i></div>
  <hr>
  <svg viewBox="0 0 32 32"><rect width="32" height="32" rx="7" fill="#ececec"/><path d="M5.500 7.500Q12 7.500 16 5q4 2.500 10.500 2.500Q27 22 16 28 5 22 5.500 7.500z" fill="#4fb06a"/><path d="M11.500 16l4 4 6-8" fill="none" stroke="#fff" stroke-width="2"/></svg>
  <svg viewBox="0 0 32 32"><rect width="32" height="32" rx="7" fill="#35d155"/><path d="M5.500 27l1.500-6a10.500 10.500 0 1 1 4 4z" fill="none" stroke="#fff" stroke-width="2"/><path d="M11.500 10.500q2-1.500 3 2l-1 1.500q1.500 3 4 4l1.500-1.300q3.500 1.300 2 3-3 2.500-7-1-4.500-4-2.500-8.200z" fill="#fff"/><circle cx="16" cy="39" r="1.800" fill="#8d8f96"/></svg>
  <svg viewBox="0 0 32 32"><rect width="32" height="32" rx="7" fill="#eceef0"/><rect x="2.500" y="3" width="27" height="16" rx="3" fill="#86b4ea"/><path d="M2.500 16h27v6h-27z" fill="#1d4678"/><path d="M2.500 22h27v2q-1 5-5 5h-17q-5 0-5-5z" fill="#c9b9a0"/><path d="M17 17h14v6H17z" fill="#15181c"/><path d="M18 23h12l2 9.500H16z" fill="#cfd2d6"/><path d="M19 25l4 4M25 25l3 4" stroke="#333" stroke-width="2"/></svg>
  <hr>
  <svg viewBox="0 0 32 32"><path d="M3.500 1H20l8.500 9v23h-25z" fill="#fdfdfd"/><path d="M20 1v9h8.500z" fill="#d4d4d4"/><path d="M10 12h12l2 13H8z" fill="#777b80"/><path d="M8 24h16v4H8z" fill="#4b4e52"/></svg>
  <svg viewBox="0 0 32 32"><path d="M2.500 3h27L26 31q-1 2-3 2H9q-2 0-3-2z" fill="#6e7072"/><path d="M10 6l1.500 26M22 6l-1.500 26M16 6v26" stroke="#85878a" stroke-width="2"/><ellipse cx="16" cy="3.500" rx="13.500" ry="3.500" fill="#c9cbcc"/><path d="M5 3l5-4 4 3 5-4 3 4 5-1 1 3q-12 4-23-1z" fill="#ecebe8"/><path d="M9 1l3 3M17 0l2 4M22 2l3 1" stroke="#333" stroke-width="1.200"/></svg>
</footer>
</body>
</html>
```
FILE: styles.css
```css
* { box-sizing: border-box; }
body { margin: 0; width: 1920px; height: 1080px; overflow: hidden; background: linear-gradient(90deg, #02040f, #030616 30%, #02040f); font-family: "Noto Sans", sans-serif; display: flex; flex-direction: column; }
svg { display: block; overflow: visible; flex: none; }
.defs { position: absolute; }
h1, h2, h3, h4, p { margin: 0; font-weight: 400; }
i { font-style: normal; }
span, a, time, b { white-space: nowrap; }

/* macOS menu bar */
.menubar { flex: none; height: 25px; background: #000; color: #fff; font: 500 13px/23px Inter, sans-serif; letter-spacing: -.17px; display: flex; justify-content: space-between; }
.menus { display: grid; grid-template-columns: 54px 59px 66px 65px 99px 70px 92px 70px 60px; }
.menus b { font-weight: 700; }
.logo { margin: 3px 0 0 21px; }
.status { display: flex; align-items: center; padding: 0 18px 2px 0; gap: 18px; }
.status svg:first-child { margin-right: 1px; }
.status svg:nth-child(2) { margin-right: -1px; }
.status time { width: 135px; font-weight: 500; letter-spacing: -.1px; margin-left: 1px; }

/* browser window */
.window { flex: none; height: 999px; border: 1px solid #6a6b6b; border-radius: 10px 10px 14px 14px; overflow: hidden; background: #2d2f2e; font-family: Inter, sans-serif; display: flex; flex-direction: column; }
.toolbar { flex: none; height: 48px; display: flex; align-items: center; padding-top: 2px; }
.lights { display: flex; gap: 8px; margin-left: 19px; width: 78px; }
.lights i { width: 12px; height: 12px; border-radius: 50%; background: #ff544d; }
.lights i + i { background: #feb02f; }
.lights i + i + i { background: #2ac23f; }
.nav-ic { margin-left: 23px; }
.urlbar { width: 780px; height: 28px; margin-left: 349px; border: 1px solid #484a49; border-radius: 8px; display: flex; align-items: center; color: #fff; font: 500 13px Inter, sans-serif; letter-spacing: -.2px; }
.urlbar > svg { margin-left: 307px; margin-right: 7px; }
.url-right { display: flex; align-items: center; gap: 7px; margin: 0 5px 0 auto; }
.right-ic { margin: -2px 0 0 459px; }
.bookmarks { flex: none; height: 27px; display: flex; align-items: center; padding-left: 16px; color: #f0f0f0; font: 500 11px Inter, sans-serif; letter-spacing: -.08px; padding-bottom: 7px; }
.bookmarks a { display: flex; align-items: center; gap: 5px; }
.grid-ic { width: 12px; }
.bm-apple { margin-left: 700px; width: 71px; }
.bm-icloud { width: 70px; }
.bookmarks .bm-icloud { gap: 6px; }
.bm-wiki { width: 89px; }
.bm-fb { width: 89px; }
.bm-x { width: 76px; }
.wik { width: 16px; height: 16px; background: #e4e4e4; color: #222; border-radius: 3px; font: 700 15px/16px "Liberation Serif", serif; text-align: center; text-indent: -1px; letter-spacing: -1px; }
.tabs { flex: none; height: 28px; display: grid; grid-template-columns: 479px 480px 481px 1fr; border-bottom: 1px solid #000; font-size: 11px; color: #8d8e8d; }
.tab { display: flex; align-items: center; background: #1a1c1b; border-right: 1px solid #444645; border-top: 1px solid #000; gap: 5px; padding-bottom: 1px; }
.t1 { padding-left: 23px; letter-spacing: -.145px; }
.t1 .snd { margin-left: 6px; }
.t2 { padding-left: 24px; letter-spacing: -.13px; }
.t3 { padding-left: 84px; gap: 7px; letter-spacing: .03px; }
.t4 { padding-left: 122px; background: none; border: 0; color: #fff; font-weight: 600; letter-spacing: -.05px; }
.fav-f { width: 16px; height: 16px; border-radius: 3px; background: #8b8a98; color: #fff; font-weight: 700; line-height: 16px; text-align: center; }

/* support console */
.console { flex: 1; display: flex; background: #0c1921; font-family: "Noto Sans", sans-serif; font-size: 15px; color: #d0d4d7; min-height: 0; }
.rail { width: 63px; background: #212f3b; padding: 22px 0 0 18px; }
.rail i { display: block; width: 24px; height: 3px; background: #cdd0d1; margin-bottom: 4px; }
.main { flex: 1; display: flex; flex-direction: column; padding-right: 7px; }
.session-bar { height: 53px; margin-right: -7px; border-bottom: 2px solid #3a4955; display: flex; justify-content: space-between; }
.session { height: 53px; width: 269px; border-bottom: 2px solid #1495b8; color: #1495b8; display: flex; align-items: center; gap: 7px; padding: 0 0 2px 16px; font-size: 14px; letter-spacing: -.05px; }
.actions { display: flex; align-items: center; padding: 0 32px 2px 0; font-size: 14px; }
.caret { border: 7px solid transparent; border-top: 8px solid #d0d4d7; border-bottom: 0; margin: 0 24px 0 8px; }
.panel { flex: none; margin: 8px 0 0 8px; height: 825px; background: #152531; display: flex; flex-direction: column; }
.panel-tabs { height: 48px; flex: none; background: #212f3b; border-bottom: 2px solid #3a4955; display: flex; font-size: 14px; line-height: 45px; letter-spacing: -.04px; }
.panel-tabs > span { height: 48px; margin-right: 17px; padding-left: 15px; }
.panel-tabs .on { color: #1495b8; border-bottom: 2px solid #1495b8; width: 155px; margin-right: 1px; padding-left: 16px; }
.panel-ic { margin-left: auto; display: flex; align-items: center; padding-right: 13px; }
.vline { width: 1px; height: 32px; background: #3a4955; margin: 0 20px 0 20px; }
.panel-ic svg:last-child { margin-left: 23px; }
.work { flex: 1; display: flex; min-height: 0; }
.share { width: 1472px; padding: 0 8px; display: flex; flex-direction: column; }
.tools { height: 48px; display: flex; align-items: center; border-bottom: 0; }
.tools svg { width: 24px; height: 24px; margin: 0 12px; }
.grow { flex: 1; }
.blk text { font: 7px "Noto Sans", sans-serif; fill: #3c4c58; }
.notice { height: 36px; background: #0c1921; border-top: 4px solid #1a5aab; display: flex; align-items: center; padding: 0 8px 1px; gap: 8px; color: #b3e6f2; font-size: 14px; letter-spacing: -.045px; }
.notice a { text-decoration: underline; }
.notice .x { margin-left: auto; }
.stage { flex: 1; border: 1px solid #1495b8; background: #3a4a56; padding: 0 110px; min-height: 0; }

/* remote desktop */
.remote { width: 1234px; height: 692px; position: relative; background: #2b2b2b; display: flex; flex-direction: column; font-family: "Noto Sans", sans-serif; }
.ch-tabs { height: 38px; flex: none; background: #d0e2fd; display: flex; padding: 6px 0 0 11px; }
.ch-tab { width: 224px; background: #fff; border-radius: 9px 9px 0 0; display: flex; align-items: center; padding: 0 11px 4px 8px; color: #444; font-size: 12px; letter-spacing: -.55px; }
.ch-tab svg { margin-left: auto; }
.gofav { width: 16px; height: 16px; background: #1c1c1c; color: #bbb; font-size: 4px; line-height: 4px; padding-top: 4px; text-align: center; margin-right: 7px; letter-spacing: 0; }
.plus { margin: 7px 0 0 14px; }
.wbtn { margin: 7px 17px 0 auto; }
.rdp { position: absolute; left: 588px; top: 0; width: 552px; height: 24px; display: flex; justify-content: center; }
.rdp-bg { position: absolute; left: 0; top: 0; }
.rdp span { position: relative; color: #cfdbe9; font-size: 11.5px; line-height: 24px; letter-spacing: -.2px; margin-left: -2px; }
.ch-bar { height: 46px; flex: none; background: #fff; border-bottom: 1px solid #999; border-radius: 8px 8px 0 0; display: flex; align-items: center; }
.cb-nav { margin-left: 10px; }
.omni { margin-left: 15px; width: 986px; height: 33px; border-radius: 17px; background: #ecf4fe; display: flex; align-items: center; color: #333; font-size: 13px; letter-spacing: -.12px; }
.site { width: 24px; height: 24px; border-radius: 50%; background: #fff; margin: 0 7px 0 5px; display: flex; align-items: center; justify-content: center; }
.omni-ic { margin: 0 9px 0 auto; }
.cb-right { margin-left: 15px; }
.page { flex: 1; position: relative; padding: 103px 0 0 252px; font-family: "Open Sans", sans-serif; }
.card { width: 730px; height: 366px; background: #fff; border-radius: 2px; display: flex; color: #333; }
.ghost { width: 343px; padding: 49px 0 0 26px; color: #fff; }
.ghost h3 { font-size: 20px; line-height: 28px; letter-spacing: .4px; text-shadow: 1px 1px 0 #e4e4e4, -1px 0 0 #f2f2f2; }
.ghost p { font-size: 8px; line-height: 21px; letter-spacing: .2px; text-shadow: .6px .6px 0 #ddd; }
.login { width: 336px; padding-top: 74px; }
.login h1 { font: 700 31px/44px Lato, sans-serif; color: #1a1a1a; text-align: center; letter-spacing: .6px; padding-left: 1px; }
.login h2 { font-size: 10.500px; line-height: 20px; margin: 22px 0 12px; letter-spacing: .05px; }
.field { height: 29px; border: 1px solid #cfd3d8; border-radius: 2px; background: #ebf4fe; margin-bottom: 15px; padding-left: 8px; position: relative; font-size: 8.500px; line-height: 25px; color: #222; }
.field label { position: absolute; left: 5px; top: -6px; padding: 0 3px; line-height: 10px; font-size: 7.500px; letter-spacing: -.1px; color: #777; background: linear-gradient(#fff 6px, #ebf4fe 6px); }
.dots { font-size: 6px; letter-spacing: .75px; font-weight: 700; -webkit-text-stroke: .4px #222; }
.row { display: flex; justify-content: space-between; align-items: center; font-size: 8px; margin-top: -1px; letter-spacing: -.04px; }
.row a { margin-top: -2px; }
.btn { position: relative; width: 110px; height: 28px; border-radius: 14px; background: #a97842; color: #fff; font-weight: 700; text-align: center; line-height: 28px; letter-spacing: .1px; box-shadow: 0 2px 4px #0006; }
.hand { position: absolute; left: 49px; top: 16px; }
.terms { font-size: 8px; font-weight: 700; line-height: 20px; margin-top: 11px; white-space: nowrap; letter-spacing: -.28px; }
.captcha { position: absolute; right: 0; bottom: 8px; width: 45px; height: 39px; background: #fff; border-radius: 2px 0 0 2px; padding: 4px 0 0 10px; box-shadow: 0 0 3px #999; }
.captcha small { display: block; margin: 1px 0 0 -10px; font-size: 3.500px; line-height: 5px; text-align: center; color: #333; }
.taskbar { height: 37px; flex: none; background: #000; display: flex; }
.apps { display: flex; align-items: center; }
.apps svg { width: 24px; height: 24px; margin: 0 11.800px; }
.act { width: 47px; height: 37px; background: #333; display: flex; align-items: center; justify-content: center; }
.apps .act svg { margin: 0; }
.disk { display: flex; gap: 65px; margin: -1px 0 0 128px; color: #222; font: 700 11px/12px "Liberation Sans", sans-serif; letter-spacing: -.33px; }
.tray { margin-left: auto; display: flex; align-items: center; color: #e8e8e8; font-size: 11.500px; line-height: 18px; text-align: center; border-right: 1px solid #555; margin-right: 3px; letter-spacing: -.3px; padding-top: 1px; }
.lng { width: 24px; margin-left: 10px; }
.clk { width: 60px; margin-left: 9px; }
.note { margin: 0 19px 0 14px; }

/* chat */
.chat { flex: 1; border: 1px solid #3a4955; border-top: 0; margin-bottom: 2px; padding: 0 8px 0 8px; display: flex; flex-direction: column; }
.chat-head { height: 63px; display: flex; align-items: center; padding-bottom: 8px; flex: none; }
.chat-head h4 { font-size: 17.500px; line-height: 22px; color: #dde0e2; }
.chat-head p { font-size: 12.500px; line-height: 17px; letter-spacing: .18px; color: #dde0e2; }
.switch { margin: 0 20px 0 auto; width: 44px; height: 24px; border-radius: 12px; background: #3a4a56; display: flex; justify-content: flex-end; }
.chev { margin-right: 17px; }
.log { height: 500px; flex: none; border: 1px solid #3a4955; background: #0c1921; padding: 9px 9px; font-size: 14px; line-height: 19px; letter-spacing: -.03px; color: #a9afb4; }
.msg { margin-top: 8px; height: 133px; flex: none; border: 1px solid #3a4955; background: #0c1921; padding: 8px 8px; font-size: 14px; line-height: 19px; letter-spacing: -.03px; color: #707a82; }
.send { display: flex; justify-content: space-between; align-items: center; padding: 13px 0 0 12px; }
.send-btn { width: 70px; height: 36px; background: #133645; color: #4b6472; font-size: 14px; line-height: 36px; text-align: center; }

/* dock */
.dock { width: 861px; height: 50px; margin: 1px 0 0 530px; flex: none; border: 1px solid #34363e; border-radius: 16px; background: #12131b; display: flex; align-items: center; padding: 0 7px 3px 5px; justify-content: space-between; }
.dock > svg, .gear svg { width: 32px; height: 32px; }
.dock .clip { overflow: hidden; border-radius: 7px; }
.cal { width: 32px; height: 32px; border-radius: 7px; overflow: hidden; background: #f5f4f2; text-align: center; font-family: Inter, sans-serif; color: #222; }
.cal b { display: block; height: 11px; background: #ee4a43; color: #fff; font-size: 7px; line-height: 11px; }
.cal span { display: block; font-size: 18px; line-height: 20px; font-weight: 300; }
.tv { width: 32px; height: 32px; border-radius: 7px; background: #16211f; color: #fff; font: 600 12px Inter, sans-serif; display: flex; align-items: center; justify-content: center; }
.gear { position: relative; width: 32px; height: 32px; }
.gear i { position: absolute; right: -4px; top: -3px; width: 14px; height: 14px; border-radius: 50%; background: #f0332f; color: #fff; font: 10px/14px Inter, sans-serif; text-align: center; }
.dock hr { width: 1px; height: 36px; margin: 3px 4px 0; border: 0; background: #44464e; }
```
